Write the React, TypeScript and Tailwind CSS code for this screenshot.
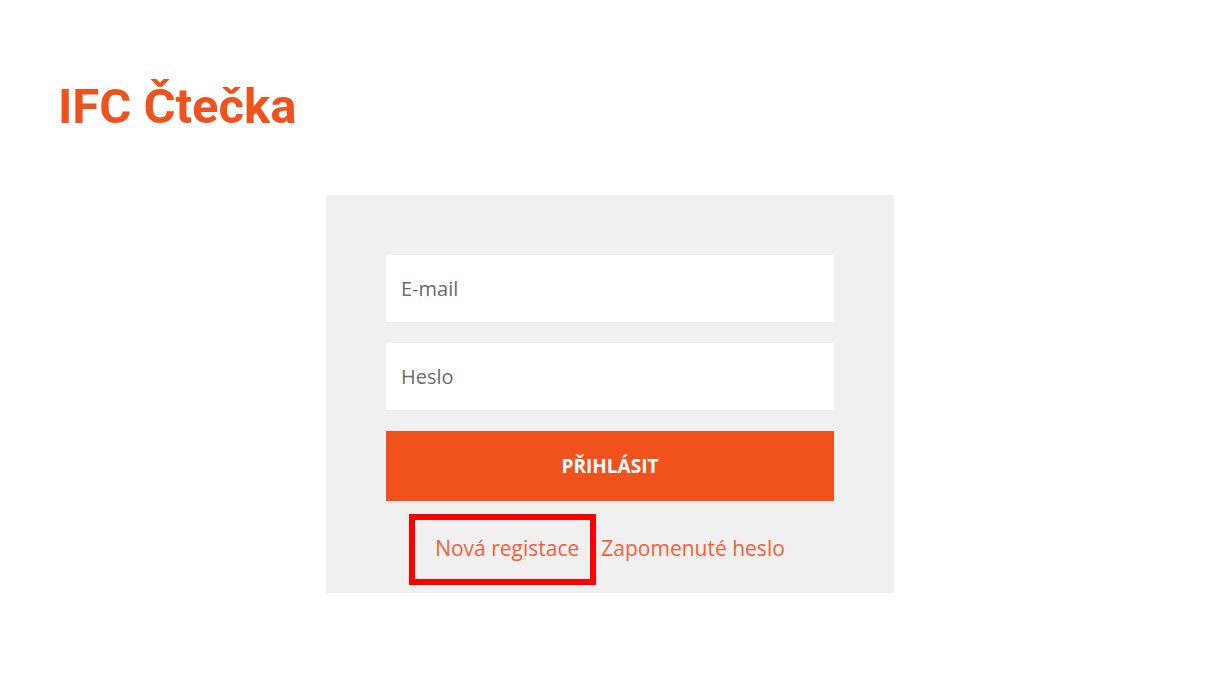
export default function App() {
  return (
    <div className="min-h-[689px] bg-white font-['Open_Sans',sans-serif]">
      <header className="pl-[58px] pt-[79px]">
        <h1 className="font-['Roboto',sans-serif] text-[49px] font-bold leading-[56px] text-[#f0521e]">
          IFC Čtečka
        </h1>
      </header>

      <div className="mt-[60px] flex justify-center pr-[4px]">
        <form className="flex w-[568px] flex-col bg-[#f0f0f0] px-[60px] pt-[60px] pb-[9px]">
          <input
            type="email"
            placeholder="E-mail"
            className="h-[67px] w-full bg-white px-[15px] text-[20px] text-[#555] placeholder:text-[#6b6b6b] outline-none"
          />
          <input
            type="password"
            placeholder="Heslo"
            className="mt-[21px] h-[67px] w-full bg-white px-[15px] text-[20px] text-[#555] placeholder:text-[#6b6b6b] outline-none"
          />
          <button
            type="button"
            className="mt-[21px] h-[70px] w-full bg-[#f0521e] text-[19px] font-bold text-white"
          >
            PŘIHLÁSIT
          </button>

          <div className="mt-[13px] flex h-[70px] items-center justify-center gap-[22px] text-[21px] text-[#f0603a]">
            <span className="relative">
              <a href="#">Nová registace</a>
              <span className="pointer-events-none absolute -left-[26px] -right-[17px] -top-[19px] -bottom-[20px] border-[6px] border-[#ff0000]" />
            </span>
            <a href="#">Zapomenuté heslo</a>
          </div>
        </form>
      </div>
    </div>
  );
}
